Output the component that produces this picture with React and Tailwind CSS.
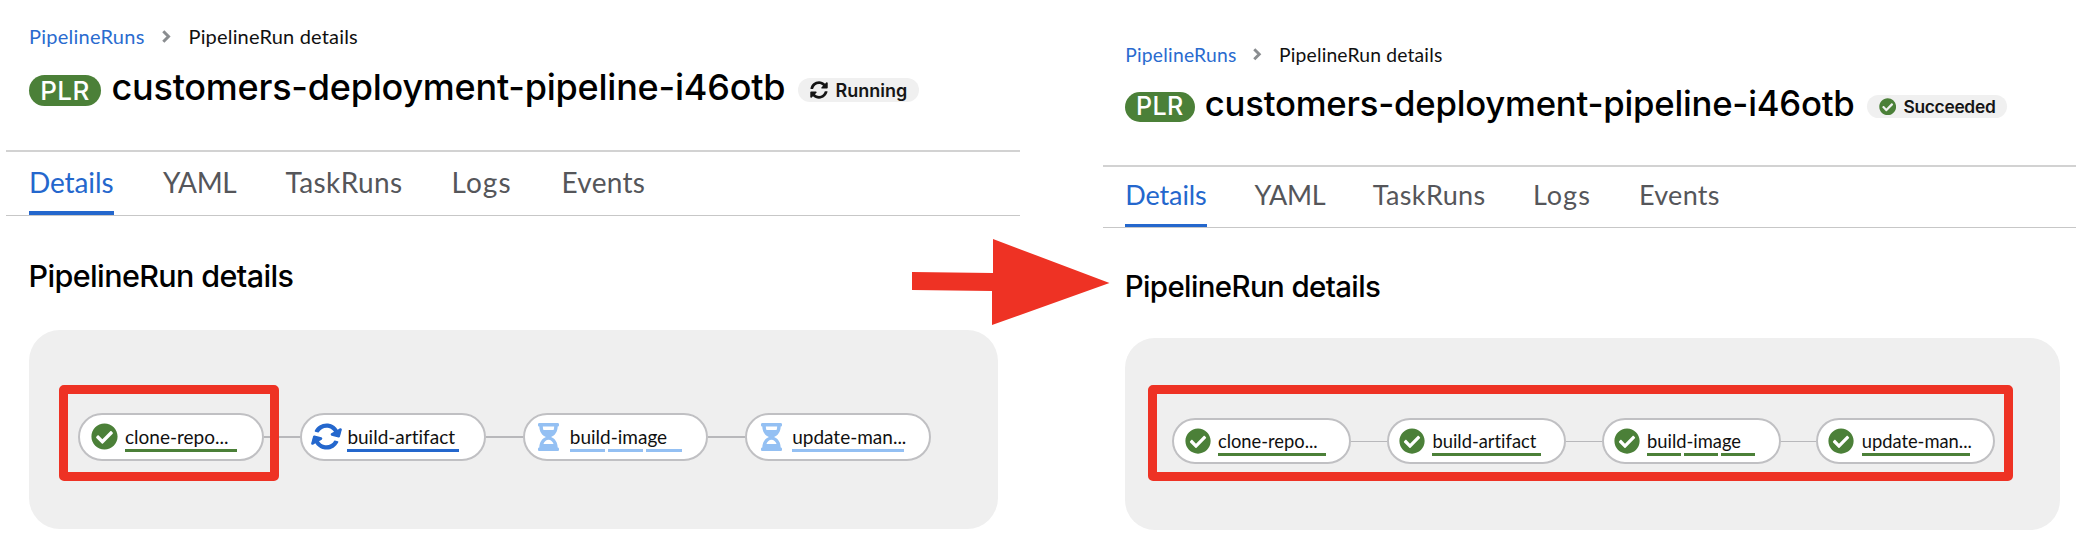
import { FaCheckCircle, FaHourglassHalf, FaSyncAlt } from "react-icons/fa";

const TABS = [
  { label: "Details", cell: "w-[134px]", spacing: "tracking-[-0.1px]", active: true },
  { label: "YAML", cell: "w-[122.5px]", spacing: "tracking-[-0.4px]" },
  { label: "TaskRuns", cell: "w-[166px]", spacing: "tracking-[0.4px]" },
  { label: "Logs", cell: "w-[110px]", spacing: "tracking-[1.1px]" },
  { label: "Events", cell: "w-[90px]", spacing: "tracking-[0.3px]" },
];

const TONES = {
  done: "bg-[#4b8038]",
  running: "bg-[#2467cd]",
  pending: "bg-[#94c0f3]",
};

function StatusIcon({ status }) {
  if (status === "done") return <FaCheckCircle className="size-[27px] text-[#4b8038]" />;
  if (status === "running") return <FaSyncAlt className="size-[27px] rotate-[15deg] text-[#2467cd]" />;
  return <FaHourglassHalf className="ml-[3px] h-[28px] w-[21px] text-[#94c0f3]" />;
}

function TaskNode({ name, status, steps }) {
  return (
    <div className="flex h-[47.5px] w-[185.5px] shrink-0 items-center rounded-full border-[2.1px] border-[#c0c0c3] bg-white">
      <div className="flex w-[45px] shrink-0 items-center pl-[10.5px]">
        <StatusIcon status={status} />
      </div>
      <div className="flex flex-col pt-[3px]">
        <span className="h-[24px] whitespace-nowrap text-[19px] leading-[24px] text-[#101010] [font-variant-ligatures:none]">{name}</span>
        <div className="flex w-[112px] gap-[3px]">
          {Array.from({ length: steps }, (_, i) => (
            <span key={i} className={`h-[3.2px] flex-1 ${TONES[status]}`} />
          ))}
        </div>
      </div>
    </div>
  );
}

function Pipeline({ tasks }) {
  return (
    <div className="flex h-[199.5px] w-[969px] items-start rounded-[31px] bg-[#efefef] pl-[49px] pt-[83.5px]">
      {tasks.map((task, i) => (
        <div key={task.name} className="flex items-center">
          {i > 0 && <span className="h-[1.6px] w-[36.9px] bg-[#b8b8bb]" />}
          <TaskNode {...task} />
        </div>
      ))}
    </div>
  );
}

function RunDetails({ pill, tasks }) {
  return (
    <section className="flex w-[1014px] flex-col">
      <nav className="mt-[22px] flex h-[28px] items-center pl-[23px] text-[20px] leading-[28px]">
        <span className="w-[132.5px] tracking-[0.25px] text-[#2a6bcf]">PipelineRuns</span>
        <svg className="mr-[18px] h-[13px] w-[9px]" viewBox="0 0 9 13">
          <path d="M1.300 1.300L6.500 6.500L1.300 11.700" fill="none" stroke="#8a8d90" strokeWidth="3" />
        </svg>
        <span className="tracking-[0.18px] text-[#101010]">PipelineRun details</span>
      </nav>
      <header className="mt-[16px] flex h-[48px] items-center pl-[23px] font-['Inter',sans-serif]">
        <span className="flex h-[31px] w-[72px] items-center justify-center rounded-full bg-[#4b8038] text-[26px] font-medium tracking-[0.4px] text-white">PLR</span>
        <h1 className="ml-[10.5px] w-[686.5px] whitespace-nowrap pb-[6px] text-[36px] font-medium leading-[41px] tracking-[-0.23px] text-black">customers-deployment-pipeline-i46otb</h1>
        {pill}
      </header>
      <div className="mt-[36px] flex h-[66px] border-b-[1.1px] border-t-[2.1px] border-b-[#c7c7c7] border-t-[#d2d2d2] pl-[23px] text-[28px]">
        {TABS.map((tab) => (
          <div key={tab.label} className={`flex ${tab.cell}`}>
            <div className={`flex items-center border-b-4 ${tab.spacing} ${tab.active ? "w-[85px] border-[#2467cd] text-[#2467cd]" : "border-transparent text-[#55565a]"}`}>
              {tab.label}
            </div>
          </div>
        ))}
      </div>
      <h2 className="mt-[40px] h-[40px] pl-[22.5px] font-['Inter',sans-serif] text-[30.5px] font-medium leading-[40px] tracking-[-0.62px] text-black">PipelineRun details</h2>
      <div className="mt-[33.5px] pl-[23px]">
        <Pipeline tasks={tasks} />
      </div>
    </section>
  );
}

function Pill({ icon, label, className }) {
  return (
    <span className={`flex h-[24px] items-center rounded-full bg-[#f0f0f0] pl-[12px] text-[18px] font-semibold text-[#151515] ${className}`}>
      {icon}
      <span className="ml-[7.5px]">{label}</span>
    </span>
  );
}

const LEFT = [
  { name: "clone-repo...", status: "done", steps: 1 },
  { name: "build-artifact", status: "running", steps: 1 },
  { name: "build-image", status: "pending", steps: 3 },
  { name: "update-man...", status: "pending", steps: 1 },
];
const RIGHT = LEFT.map((task) => ({ ...task, status: "done" }));

export default function App() {
  return (
    <main className="relative flex h-[552px] w-[2076px] overflow-hidden bg-white pl-[6px] font-['Lato',sans-serif]">
      <div className="w-[1014px] shrink-0">
        <RunDetails
          tasks={LEFT}
          pill={<Pill className="w-[121px]" label="Running" icon={<FaSyncAlt className="size-[18px]" />} />}
        />
      </div>
      <div className="ml-[83px] shrink-0 pt-[20px]">
        <div className="[zoom:0.965]">
          <RunDetails
            tasks={RIGHT}
            pill={<Pill className="w-[145px] tracking-[-0.3px]" label="Succeeded" icon={<FaCheckCircle className="size-[18px] text-[#4b8038]" />} />}
          />
        </div>
      </div>
      <div className="absolute left-[59px] top-[385px] h-[96px] w-[219.5px] rounded-[5px] border-[9px] border-[#ee3224]" />
      <div className="absolute left-[1148px] top-[385px] h-[96px] w-[864.5px] rounded-[5px] border-[9px] border-[#ee3224]" />
      <svg className="absolute left-[912px] top-[239px] h-[87px] w-[198px]" viewBox="0 0 198 87">
        <path d="M0 33L81 34V0L197.500 44L80 86V52L0 51Z" fill="#ee3224" />
      </svg>
    </main>
  );
}
